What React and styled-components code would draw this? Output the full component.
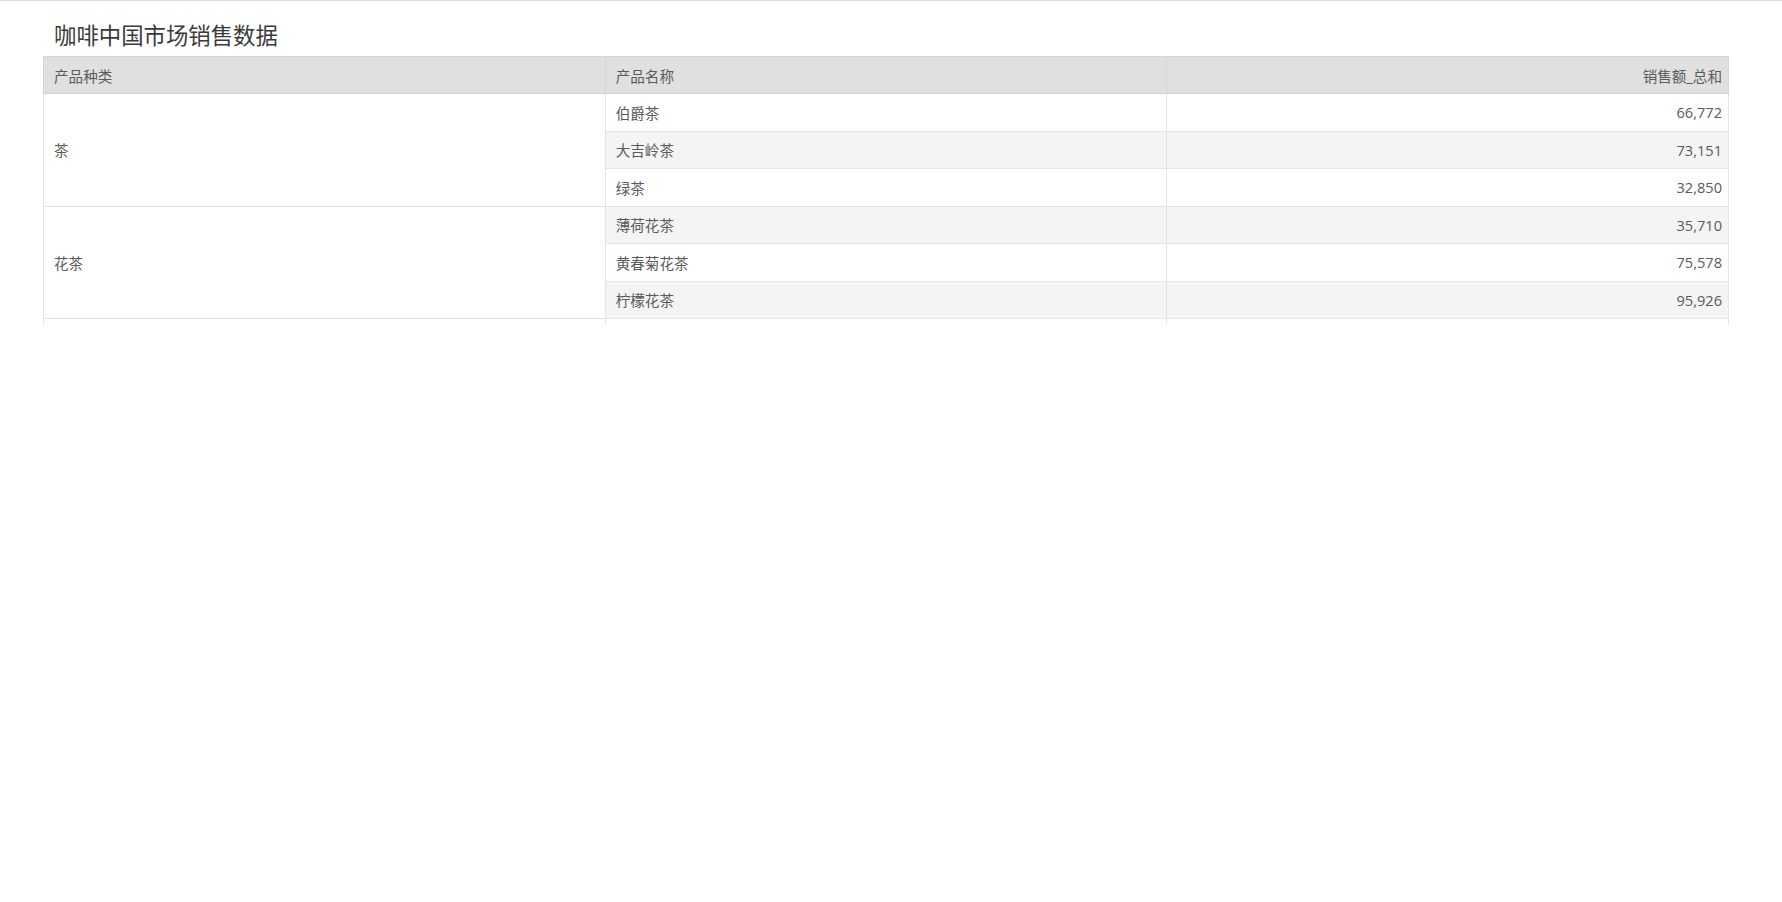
import styled, { createGlobalStyle } from "styled-components";

const GlobalStyle = createGlobalStyle`
  html, body {
    margin: 0;
    padding: 0;
    background: #fff;
  }
  body {
    font-family: "Open Sans", "Noto Sans CJK SC", sans-serif;
    color: #555;
  }
`;

// 页面外框，顶部一条细线
const Page = styled.div`
  border-top: 1px solid #dcdcdc;
  padding: 0 53px 0 43px;
`;

const Title = styled.h2`
  margin: 0;
  padding: 18px 0 0 11px;
  height: 37px;
  line-height: 34px;
  font-size: 22.4px;
  font-weight: 400;
  color: #3a3a3a;
`;

// 表格可见区域，超出部分被裁掉
const TableViewport = styled.div`
  height: 268px;
  overflow: hidden;
`;

const Table = styled.table`
  width: 100%;
  border-collapse: collapse;
  table-layout: fixed;
  font-size: 14.6px;
`;

const HeadCell = styled.th`
  height: 37px;
  padding: 0 ${(p) => (p.$right ? "6px" : "10px")} 0 10px;
  background: #e0e0e0;
  border: 1px solid #d6d6d6;
  border-bottom-color: #d2d2d2;
  text-align: ${(p) => (p.$right ? "right" : "left")};
  font-weight: 400;
  color: #5a5a5a;
  box-sizing: border-box;
`;

const Row = styled.tr`
  height: 37.5px;
`;

const Cell = styled.td`
  padding: 0 ${(p) => (p.$right ? "6px" : "10px")} 0 10px;
  border: 1px solid #e4e4e4;
  background: ${(p) => (p.$alt ? "#f4f4f4" : "#fff")};
  text-align: ${(p) => (p.$right ? "right" : "left")};
  vertical-align: middle;
  white-space: nowrap;
  color: #5a5a5a;
`;

const GroupCell = styled(Cell)`
  background: #fff;
`;

const data = [
  {
    category: "茶",
    items: [
      { name: "伯爵茶", value: 66772 },
      { name: "大吉岭茶", value: 73151 },
      { name: "绿茶", value: 32850 },
    ],
  },
  {
    category: "花茶",
    items: [
      { name: "薄荷花茶", value: 35710 },
      { name: "黄春菊花茶", value: 75578 },
      { name: "柠檬花茶", value: 95926 },
    ],
  },
];

const fmt = (n) => n.toLocaleString("en-US");

export default function App() {
  let rowIndex = 0;
  return (
    <>
      <GlobalStyle />
      <Page>
        <Title>咖啡中国市场销售数据</Title>
        <TableViewport>
          <Table>
            <thead>
              <tr>
                <HeadCell>产品种类</HeadCell>
                <HeadCell>产品名称</HeadCell>
                <HeadCell $right>销售额_总和</HeadCell>
              </tr>
            </thead>
            <tbody>
              {data.map((group) =>
                group.items.map((item, i) => {
                  const alt = rowIndex % 2 === 1;
                  rowIndex += 1;
                  return (
                    <Row key={group.category + item.name}>
                      {i === 0 && (
                        <GroupCell rowSpan={group.items.length}>
                          {group.category}
                        </GroupCell>
                      )}
                      <Cell $alt={alt}>{item.name}</Cell>
                      <Cell $alt={alt} $right>
                        {fmt(item.value)}
                      </Cell>
                    </Row>
                  );
                })
              )}
              {/* 下一组被视口裁掉，只露出顶边 */}
              <Row>
                <GroupCell />
                <Cell />
                <Cell />
              </Row>
            </tbody>
          </Table>
        </TableViewport>
      </Page>
    </>
  );
}
